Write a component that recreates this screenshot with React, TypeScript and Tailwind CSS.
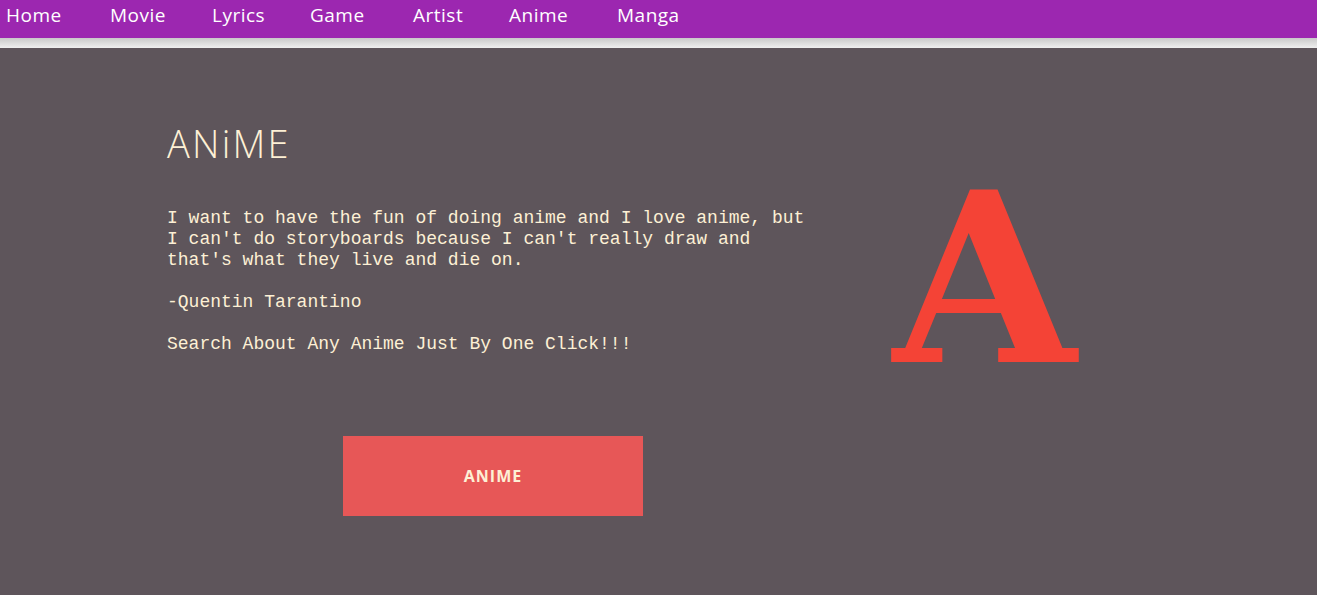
import React from "react";

const navItems: [string, string][] = [
  ["Home", "w-[104px]"],
  ["Movie", "w-[102px]"],
  ["Lyrics", "w-[98px]"],
  ["Game", "w-[103px]"],
  ["Artist", "w-[96px]"],
  ["Anime", "w-[108px]"],
  ["Manga", "w-[100px]"],
];

export default function App() {
  return (
    <div className="w-[1317px] h-[595px] overflow-hidden bg-[#5e555b] font-['Open_Sans',sans-serif]">
      <nav className="h-[38px] bg-[#9c27b0] flex items-start pl-[6px] shadow-[0_2px_4px_rgba(0,0,0,0.3)]">
        {navItems.map(([n, w]) => (
          <a key={n} className={`${w} text-[19px] leading-[30px] text-white font-normal tracking-[0.5px]`}>
            {n}
          </a>
        ))}
      </nav>
      <div className="h-[10px] bg-gradient-to-b from-[#c9c9c9] to-[#efefef]" />
      <main className="flex">
        <section className="w-[890px] pl-[167px] pt-[73px]">
          <h1 className="text-[38px] leading-[44px] font-light text-[#fdf0d5] tracking-[2.2px]">ANiME</h1>
          <p className="mt-[43px] font-['Liberation_Mono',monospace] text-[18px] leading-[21px] text-[#fdf0d5] whitespace-pre">
            {"I want to have the fun of doing anime and I love anime, but\nI can't do storyboards because I can't really draw and\nthat's what they live and die on.\n\n-Quentin Tarantino\n\nSearch About Any Anime Just By One Click!!!"}
          </p>
          <div className="mt-[81px] pl-[176px]">
            <button className="w-[300px] h-[80px] bg-[#e75757] text-[#fdf0d5] text-[16px] font-bold tracking-[1px]">
              ANIME
            </button>
          </div>
        </section>
        <div className="pt-[108px] ml-[3px]">
          <span className="block font-['DejaVu_Serif',serif] font-bold text-[#f44336] text-[236px] leading-[246px]">A</span>
        </div>
      </main>
    </div>
  );
}
